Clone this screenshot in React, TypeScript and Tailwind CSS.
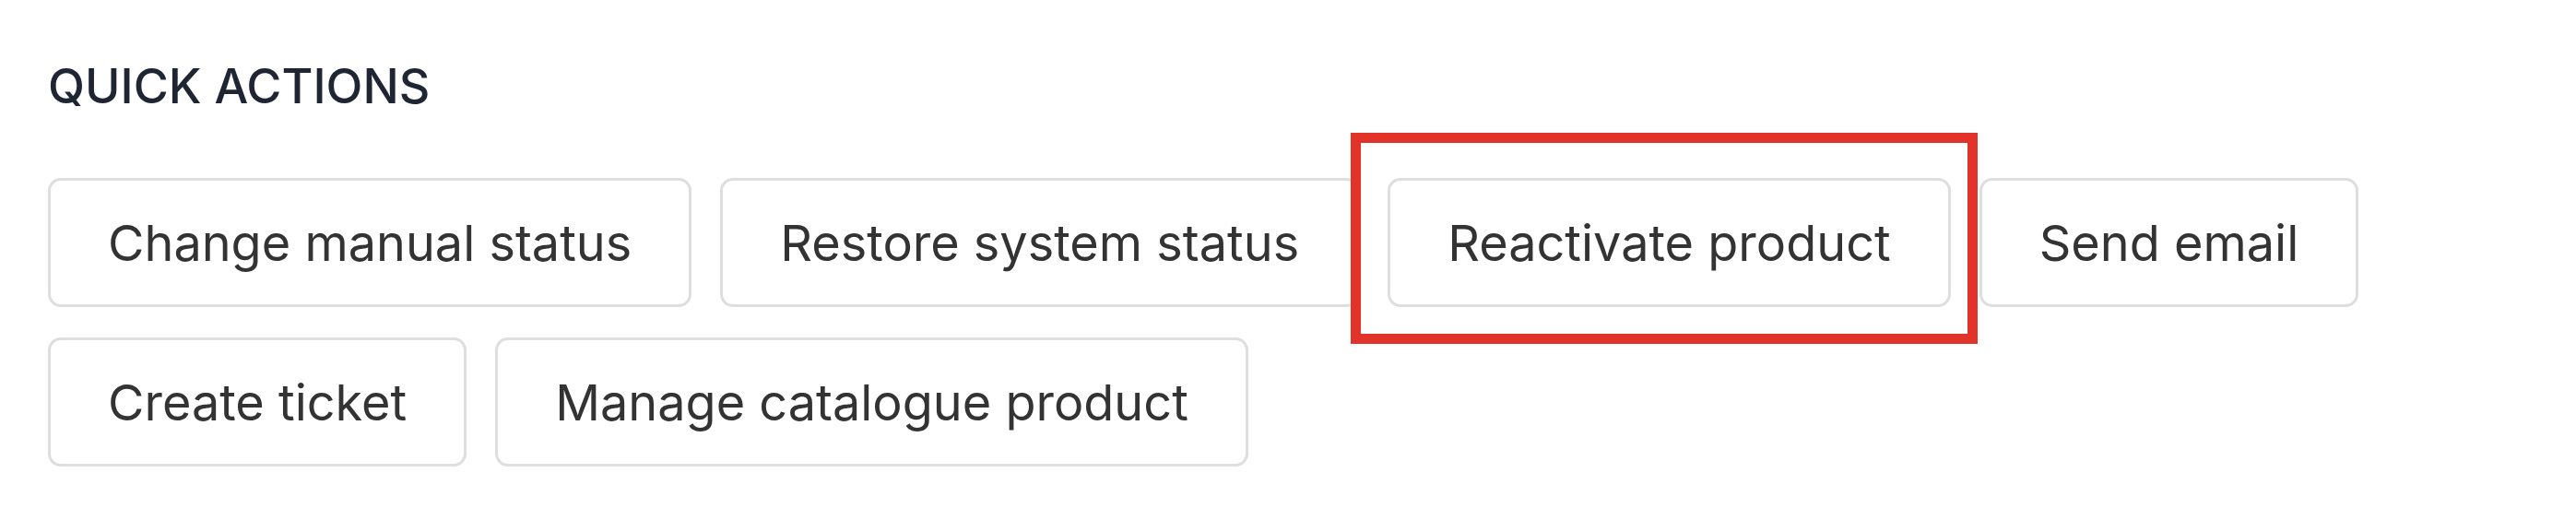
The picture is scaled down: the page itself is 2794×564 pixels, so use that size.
const actions = [
  "Change manual status",
  "Restore system status",
  "Reactivate product",
  "Send email",
  "Create ticket",
  "Manage catalogue product",
];

function ActionButton({ label, highlighted }: { label: string; highlighted?: boolean }) {
  return (
    <div className="relative">
      <button className="flex h-[140px] items-center rounded-[14px] border-[3px] border-[#dedede] bg-white px-[62px] text-[54px] text-[#333333]">
        {label}
      </button>
      {highlighted && (
        <div className="pointer-events-none absolute -left-[40px] -top-[49px] -right-[29px] -bottom-[40px] border-[11px] border-[#e2332a]" />
      )}
    </div>
  );
}

export default function App() {
  return (
    <div
      className="min-h-screen w-full bg-white pl-[52px] pt-[61px]"
      style={{ fontFamily: "Inter, 'Noto Sans', sans-serif" }}
    >
      <h2 className="text-[52px] font-medium uppercase leading-[65px] text-[#1f2532]">Quick actions</h2>
      <div className="mt-[67px] flex flex-wrap gap-x-[31px] gap-y-[33px]">
        {actions.map((a) => (
          <ActionButton key={a} label={a} highlighted={a === "Reactivate product"} />
        ))}
      </div>
    </div>
  );
}
